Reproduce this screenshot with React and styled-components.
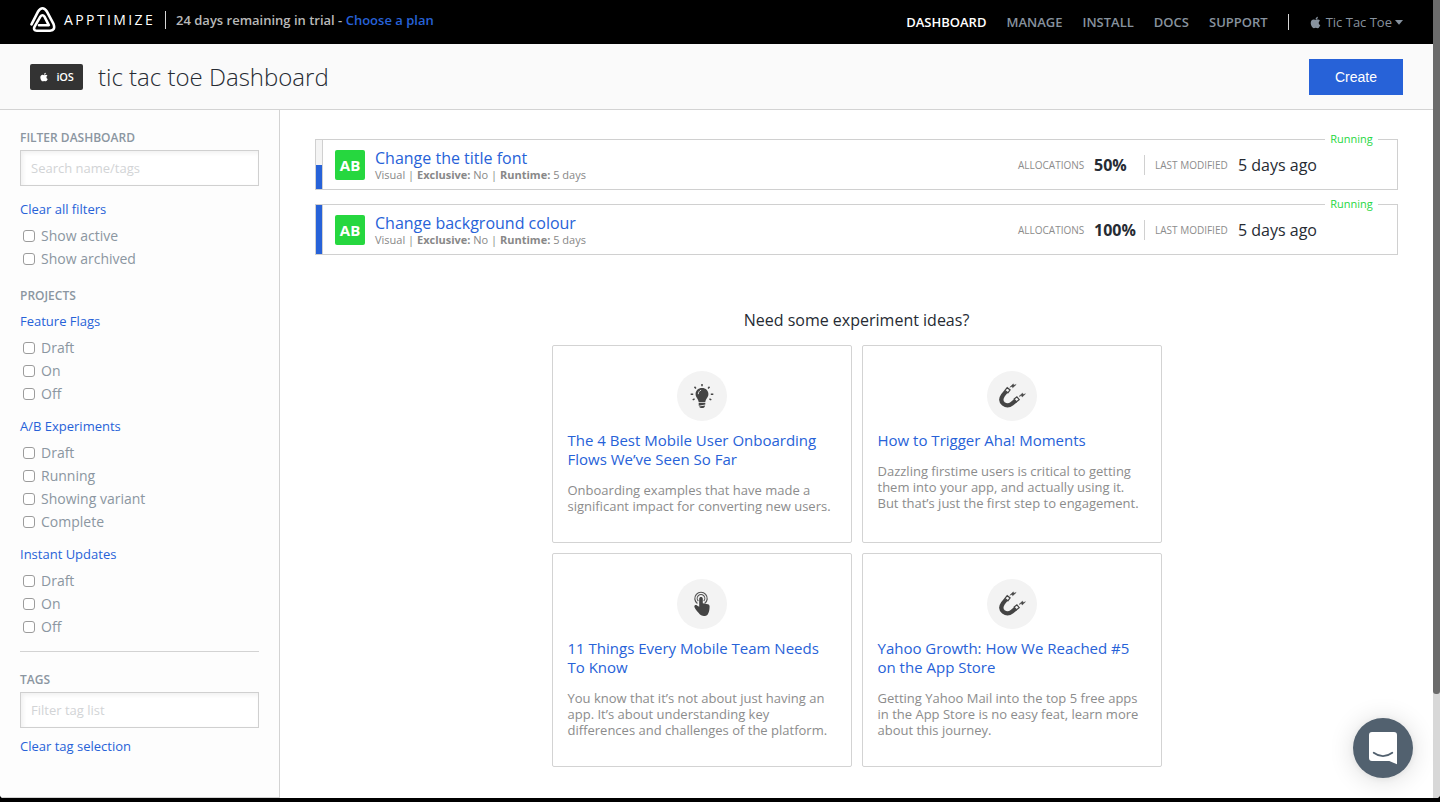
import React from "react";
import styled, { createGlobalStyle } from "styled-components";
import { FaApple } from "react-icons/fa";

const Global = createGlobalStyle`
  * { box-sizing: border-box; }
  html, body { margin: 0; padding: 0; background: #000; overflow: hidden; }
  body { font-family: "Open Sans", "Noto Sans", sans-serif; color: #262b33; }
  a { text-decoration: none; color: inherit; }
  h1, h2, h3, p, ul { margin: 0; padding: 0; font-weight: 400; }
  ul { list-style: none; }
`;

const Window = styled.div`
  display: flex;
  width: 1440px;
  height: 798px;
  background: #fff;
  border-radius: 0 0 4px 4px;
  overflow: hidden;
`;
const Page = styled.div`
  display: flex;
  flex-direction: column;
  width: 1433px;
`;
const ScrollTrack = styled.div`
  width: 7px;
  background: #d8d8d8;
`;
const ScrollThumb = styled.div`
  height: 694px;
  background: #6b6b6b;
  border-radius: 0 0 3px 3px;
`;

const TopBar = styled.header`
  display: flex;
  justify-content: space-between;
  height: 44px;
  padding: 0 30px;
  background: #000;
`;
const Brand = styled.div`
  display: flex;
  align-items: center;
  height: 40px;
`;
const Wordmark = styled.span`
  width: 92px;
  margin: 0 9px 0 8px;
  color: #fff;
  font-size: 14px;
  line-height: 20px;
  letter-spacing: 2.4px;
  white-space: nowrap;
`;
const Trial = styled.span`
  margin-left: 10px;
  color: #b9b9b9;
  font-size: 13px;
  font-weight: 600;
  white-space: nowrap;
  a { color: #2762d8; }
`;
const Bar = styled.i`
  width: 1px;
  height: ${(p) => p.$h}px;
  background: ${(p) => p.$c || "#d6d6d6"};
  flex: none;
`;
const Nav = styled.nav`
  display: flex;
  align-items: center;
  height: 44px;
`;
const NavLink = styled.a`
  margin-right: 20px;
  font-size: 13px;
  font-weight: 600;
  color: ${(p) => (p.$active ? "#fff" : "#87929e")};
  white-space: nowrap;
`;
const AppSwitch = styled.a`
  display: flex;
  align-items: center;
  margin-left: 20px;
  color: #87929e;
  font-size: 13px;
  white-space: nowrap;
  span { margin: 0 3px 0 4px; }
`;

const TitleBar = styled.div`
  display: flex;
  align-items: center;
  justify-content: space-between;
  height: 66px;
  padding: 0 30px;
  background: #fafafa;
  border-bottom: 1px solid #d3d3d3;
`;
const TitleGroup = styled.div`
  display: flex;
  align-items: center;
`;
const Platform = styled.span`
  display: flex;
  align-items: center;
  justify-content: center;
  gap: 7px;
  width: 53px;
  height: 26px;
  border-radius: 2px;
  background: #333;
  color: #fff;
  font-size: 11px;
  font-weight: 600;
  letter-spacing: -0.2px;
`;
const Title = styled.h1`
  margin-left: 15px;
  font-size: 24px;
  font-weight: 300;
  line-height: 32px;
  white-space: nowrap;
`;
const Create = styled.button`
  width: 94px;
  height: 36px;
  border: 0;
  padding: 0;
  background: #2762d8;
  color: #fff;
  font: 14px "Liberation Sans", Arial, sans-serif;
`;

const Body = styled.div`
  display: flex;
  flex: 1;
`;
const Sidebar = styled.aside`
  width: 280px;
  padding: 19px 20px 0;
  background: #fdfdfd;
  border-right: 1px solid #d3d3d3;
  border-bottom: 1px solid #d3d3d3;
`;
const Caption = styled.h2`
  font-size: 12px;
  font-weight: 600;
  line-height: 18px;
  color: #8b96a1;
`;
const Search = styled.input`
  display: block;
  width: 239px;
  height: 36px;
  margin-top: 3px;
  padding: 0 10px;
  border: 1px solid #d0d0d0;
  border-radius: 0;
  box-shadow: inset 2px 2px 4px #f0f0f0;
  background: #fff;
  font: 13px "Open Sans", sans-serif;
  &::placeholder { color: #d2d4d6; opacity: 1; }
`;
const SideLink = styled.a`
  display: block;
  margin-top: ${(p) => p.$top}px;
  color: #2762d8;
  font-size: 13px;
  line-height: 18px;
`;
const Options = styled.ul`
  margin: 6px 0 ${(p) => p.$bottom || 0}px;
`;
const Option = styled.li`
  display: flex;
  align-items: center;
  height: 23px;
  padding-left: 3px;
  color: #8b96a1;
  font-size: 14px;
  line-height: 23px;
`;
const Box = styled.span`
  width: 12px;
  height: 12px;
  margin-right: 6px;
  border: 1px solid #9c9c9c;
  border-radius: 3px;
  background: #fff;
`;
const Divider = styled.hr`
  margin: 13px 0 19px;
  border: 0;
  height: 1px;
  background: #d3d3d3;
`;

const Main = styled.main`
  flex: 1;
  padding: 29px 35px 0;
`;
const Experiment = styled.article`
  position: relative;
  display: flex;
  align-items: center;
  width: 1083px;
  height: 51px;
  margin-bottom: 14px;
  border: 1px solid #d0d0d0;
`;
const Meter = styled.div`
  display: flex;
  align-items: flex-end;
  width: 7px;
  height: 49px;
  border-right: 1px solid #d0d0d0;
  background: #f4f4f4;
`;
const MeterFill = styled.div`
  width: 100%;
  height: ${(p) => p.$value}%;
  background: #2762d8;
`;
const Kind = styled.span`
  display: flex;
  align-items: center;
  justify-content: center;
  width: 30px;
  height: 30px;
  margin: 0 10px 0 12px;
  border-radius: 2px;
  background: #26d73f;
  color: #fff;
  font-size: 15px;
  font-weight: 700;
`;
const Info = styled.div`
  width: 643px;
`;
const Name = styled.h3`
  margin-top: 1px;
  color: #2762d8;
  font-size: 16px;
  line-height: 20px;
`;
const Meta = styled.p`
  color: #888;
  font-size: 11px;
  line-height: 14px;
`;
const Label = styled.span`
  color: #8c8c8c;
  font-size: 10px;
  white-space: nowrap;
  width: ${(p) => p.$w}px;
`;
const Value = styled.span`
  width: ${(p) => p.$w}px;
  font-size: 16px;
  font-weight: ${(p) => (p.$bold ? 700 : 400)};
  white-space: nowrap;
`;
const Stat = styled.div`
  display: flex;
  align-items: center;
  padding: 0 10px 0 ${(p) => p.$left || 0}px;
`;
const Status = styled.span`
  position: absolute;
  top: -8px;
  right: 19px;
  width: 53px;
  height: 14px;
  background: #fff;
  color: #26d73f;
  font-size: 11px;
  line-height: 14px;
  text-align: center;
`;

const IdeasTitle = styled.h2`
  margin-top: 54px;
  height: 22px;
  font-size: 16px;
  line-height: 22px;
  text-align: center;
`;
const Ideas = styled.section`
  display: grid;
  grid-template-columns: 300px 300px;
  gap: 10px;
  justify-content: center;
  margin-top: 14px;
`;
const Idea = styled.article`
  display: flex;
  flex-direction: column;
  border: 1px solid #d3d3d3;
  border-radius: 2px;
  padding: 25px 15px 28px;
`;
const Disc = styled.span`
  display: flex;
  align-items: center;
  justify-content: center;
  align-self: center;
  width: 50px;
  height: 50px;
  border-radius: 50%;
  background: #f3f3f3;
`;
const IdeaTitle = styled.h3`
  margin: 10px 0 13px;
  color: #2762d8;
  font-size: 15px;
  line-height: 19px;
  white-space: pre;
`;
const IdeaText = styled.p`
  color: #8c8c8c;
  font-size: 13px;
  line-height: 16px;
  white-space: pre;
`;
const Chat = styled.button`
  position: absolute;
  left: 1353px;
  top: 718px;
  display: flex;
  align-items: center;
  justify-content: center;
  width: 60px;
  height: 60px;
  padding: 0;
  border: 0;
  border-radius: 50%;
  background: #52616f;
  box-shadow: 0 1px 6px rgba(0, 0, 0, 0.06), 0 2px 26px rgba(0, 0, 0, 0.14);
`;

const Logo = () => (
  <svg width="26" height="26" viewBox="0 0 26 26" fill="none" stroke="#fff" strokeWidth="2.6" strokeLinejoin="round" strokeLinecap="round">
    <path d="M1.500 17.400 L7.900 4.800 Q12.500 -2.200 17.100 4.800 L23.500 16.800 Q25.800 23.500 20 23.800 H7 Q2.800 23.400 4.600 19.600 L10.200 9.800 Q12.500 6.800 14.600 9.800 L18.800 18.200 H9" />
  </svg>
);
const Caret = () => (
  <svg width="8" height="5" viewBox="0 0 8 5">
    <path d="M0 0h8L4 4.800z" fill="currentColor" />
  </svg>
);
const Bulb = () => (
  <svg width="24" height="26" viewBox="0 0 24 26">
    <g transform="translate(-.5 0)">
      <path fill="#444" d="M12.500 5c-3.900 0-6.400 2.700-6.400 6 0 3.300 2.500 4.600 3.100 8h6.600c.6-3.400 3.100-4.700 3.100-8 0-3.300-2.500-6-6.400-6zM9.200 19.700h6.600v1.900l-6.600 1.200zM9.500 23.500l6.100-1.100c-.1 1.700-1.400 2.600-3.100 2.600-1.300 0-2.400-.5-3-1.500z" />
      <path d="M8.800 11.200c0-2 1-3.400 2.800-4" fill="none" stroke="#ddd" strokeWidth="1" />
      <path d="M12.500 1v2.300M5 3.700l1.400 1.700M20 3.700l-1.400 1.700M1.200 11.300h2.500M21.300 11.300h2.500M3.200 16.900l1.900-1M21.800 16.900l-1.900-1" stroke="#444" strokeWidth="1.500" />
    </g>
  </svg>
);
const Magnet = () => (
  <svg width="28" height="26" viewBox="0 0 28 26">
    <path d="M8 8.500 L5 12.200 C2.500 15.800 3.200 19 5.500 20.900 C8.200 23 11.500 22.600 14 20.600 L17.600 17.600" fill="none" stroke="#444" strokeWidth="4.200" />
    <path d="M7 7.400l2.200-2.700 2.900 2.200-2.200 2.900zM16.200 16l2.700-2.200 2.300 2.800-2.800 2.200z" fill="#f3f3f3" stroke="#444" strokeWidth="1.200" />
    <path d="M11.800 4.300l3.500-3.500.4 1.400 2.500-.7-3.500 3.300-.6-1.400zM21 13.400l3.500-3.300.5 1.400 2.500-.7-3.300 3.200-.7-1.400z" fill="#444" stroke="#444" strokeWidth=".4" />
  </svg>
);
const Tap = () => (
  <svg width="18" height="26" viewBox="0 0 18 26">
    <g fill="none" stroke="#555">
      <path d="M4.400 12.500a6.200 6.200 0 1 1 7.200 0" strokeWidth="1.200" />
      <path d="M5.300 10a3.800 3.800 0 1 1 5.400 0" strokeWidth="1.100" />
    </g>
    <path fill="#444" d="M6.200 7.800c0-2.300 3.600-2.300 3.600 0v4.400l5 1c1.300.3 1.900 1.200 1.800 2.500-.1 3.500-.5 5.500-1.900 7.700-1.700 2.100-5.800 2.100-7.700.2-1.800-2.200-4.600-4.900-5.600-7.600-.4-1.800 1.500-2.400 2.600-1.600l2.200 1.400z" />
  </svg>
);
const ChatIcon = () => (
  <svg width="28" height="33" viewBox="0 0 28 33">
    <path fill="#fff" d="M3 0h22a3 3 0 0 1 3 3v29.300L20.300 29H3a3 3 0 0 1-3-3V3a3 3 0 0 1 3-3z" />
    <path d="M4.700 20.800q9.300 6.800 18.600 0" fill="none" stroke="#52616f" strokeWidth="1.800" strokeLinecap="round" />
  </svg>
);

const groups = [
  ["Feature Flags", ["Draft", "On", "Off"]],
  ["A/B Experiments", ["Draft", "Running", "Showing variant", "Complete"]],
  ["Instant Updates", ["Draft", "On", "Off"]],
];
const experiments = [
  ["Change the title font", 50],
  ["Change background colour", 100],
];
const ideas = [
  [Bulb, "The 4 Best Mobile User Onboarding\nFlows We’ve Seen So Far", "Onboarding examples that have made a\nsignificant impact for converting new users."],
  [Magnet, "How to Trigger Aha! Moments", "Dazzling firstime users is critical to getting\nthem into your app, and actually using it.\nBut that’s just the first step to engagement."],
  [Tap, "11 Things Every Mobile Team Needs\nTo Know", "You know that it’s not about just having an\napp. It’s about understanding key\ndifferences and challenges of the platform."],
  [Magnet, "Yahoo Growth: How We Reached #5\non the App Store", "Getting Yahoo Mail into the top 5 free apps\nin the App Store is no easy feat, learn more\nabout this journey."],
];

const OptionList = ({ items, bottom }) => (
  <Options $bottom={bottom}>
    {items.map((t) => (
      <Option key={t}><Box />{t}</Option>
    ))}
  </Options>
);

export default function App() {
  return (
    <>
      <Global />
      <Window>
        <Page>
          <TopBar>
            <Brand>
              <Logo />
              <Wordmark>APPTIMIZE</Wordmark>
              <Bar $h={18} />
              <Trial>24 days remaining in trial - <a href="#plan">Choose a plan</a></Trial>
            </Brand>
            <Nav>
              <NavLink $active>DASHBOARD</NavLink>
              <NavLink>MANAGE</NavLink>
              <NavLink>INSTALL</NavLink>
              <NavLink>DOCS</NavLink>
              <NavLink>SUPPORT</NavLink>
              <Bar $h={16} />
              <AppSwitch><FaApple size={13} /><span>Tic Tac Toe</span><Caret /></AppSwitch>
            </Nav>
          </TopBar>
          <TitleBar>
            <TitleGroup>
              <Platform><FaApple size={10} />iOS</Platform>
              <Title>tic tac toe Dashboard</Title>
            </TitleGroup>
            <Create>Create</Create>
          </TitleBar>
          <Body>
            <Sidebar>
              <Caption>FILTER DASHBOARD</Caption>
              <Search placeholder="Search name/tags" />
              <SideLink $top={14}>Clear all filters</SideLink>
              <OptionList items={["Show active", "Show archived"]} bottom={17} />
              <Caption>PROJECTS</Caption>
              {groups.map(([name, items], i) => (
                <React.Fragment key={name}>
                  <SideLink $top={i ? 12 : 7}>{name}</SideLink>
                  <OptionList items={items} />
                </React.Fragment>
              ))}
              <Divider />
              <Caption>TAGS</Caption>
              <Search placeholder="Filter tag list" />
              <SideLink $top={9}>Clear tag selection</SideLink>
            </Sidebar>
            <Main>
              {experiments.map(([name, value]) => (
                <Experiment key={name}>
                  <Meter><MeterFill $value={value} /></Meter>
                  <Kind>AB</Kind>
                  <Info>
                    <Name>{name}</Name>
                    <Meta>Visual | <b>Exclusive:</b> No | <b>Runtime:</b> 5 days</Meta>
                  </Info>
                  <Stat>
                    <Label $w={76}>ALLOCATIONS</Label>
                    <Value $bold $w={40}>{value}%</Value>
                  </Stat>
                  <Bar $h={20} $c="#d0d0d0" />
                  <Stat $left={10}>
                    <Label $w={83}>LAST MODIFIED</Label>
                    <Value $w={80}>5 days ago</Value>
                  </Stat>
                  <Status>Running</Status>
                </Experiment>
              ))}
              <IdeasTitle>Need some experiment ideas?</IdeasTitle>
              <Ideas>
                {ideas.map(([Icon, title, text]) => (
                  <Idea key={title}>
                    <Disc><Icon /></Disc>
                    <IdeaTitle>{title}</IdeaTitle>
                    <IdeaText>{text}</IdeaText>
                  </Idea>
                ))}
              </Ideas>
            </Main>
          </Body>
        </Page>
        <ScrollTrack><ScrollThumb /></ScrollTrack>
      </Window>
      <Chat aria-label="Chat"><ChatIcon /></Chat>
    </>
  );
}
